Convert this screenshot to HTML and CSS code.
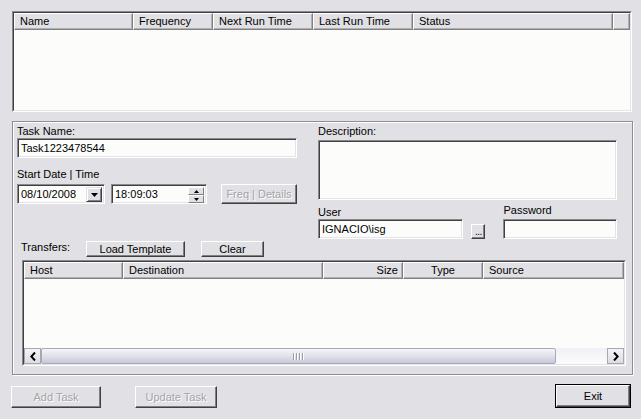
FILE: index.html
```html
<!DOCTYPE html>
<html>
<head>
<meta charset="utf-8">
<link rel="stylesheet" href="styles.css">
</head>
<body>
<div class="window">
  <div class="listview tasks">
    <div class="lv-inner">
      <div class="lv-header">
        <div class="hcell t-name">Name</div>
        <div class="hcell t-freq">Frequency</div>
        <div class="hcell t-next">Next Run Time</div>
        <div class="hcell t-last">Last Run Time</div>
        <div class="hcell t-status">Status</div>
        <div class="hcell t-fill"></div>
      </div>
      <div class="lv-body"></div>
    </div>
  </div>

  <div class="group">
    <div class="fields">
      <div class="col-left">
        <div class="label">Task Name:</div>
        <div class="field task-name">Task1223478544</div>
        <div class="label start-label">Start Date | Time</div>
        <div class="dt-row">
          <div class="field combo">
            <span class="val">08/10/2008</span>
            <span class="drop-btn"><svg width="7" height="4" viewBox="0 0 7 4"><path d="M0 0H7L3.5 4Z" fill="#000"/></svg></span>
          </div>
          <div class="field time">
            <span class="val">18:09:03</span>
            <span class="spin">
              <span class="spin-btn"><svg width="5" height="3" viewBox="0 0 5 3"><path d="M2.5 0L5 3H0Z" fill="#000"/></svg></span>
              <span class="spin-btn"><svg width="5" height="3" viewBox="0 0 5 3"><path d="M0 0H5L2.5 3Z" fill="#000"/></svg></span>
            </span>
          </div>
          <div class="btn disabled freq">Freq | Details</div>
        </div>
      </div>
      <div class="col-right">
        <div class="label">Description:</div>
        <div class="field desc"></div>
        <div class="cred-row">
          <div class="cred user">
            <div class="label">User</div>
            <div class="field">IGNACIO\isg</div>
          </div>
          <div class="btn browse"><span class="dots">...</span></div>
          <div class="cred pass">
            <div class="label pass-label">Password</div>
            <div class="field"></div>
          </div>
        </div>
      </div>
    </div>

    <div class="transfers-row">
      <div class="label tr-label">Transfers:</div>
      <div class="btn load">Load Template</div>
      <div class="btn clear">Clear</div>
    </div>

    <div class="listview transfers">
      <div class="lv-inner">
        <div class="lv-header">
          <div class="hcell r-host">Host</div>
          <div class="hcell r-dest">Destination</div>
          <div class="hcell r-size">Size</div>
          <div class="hcell r-type">Type</div>
          <div class="hcell r-src">Source</div>
        </div>
        <div class="lv-body"></div>
        <div class="hscroll">
          <div class="sb-arrow"><svg width="6" height="9" viewBox="0 0 6 9"><path d="M5 0.5L1.3 4.5L5 8.5" fill="none" stroke="#000" stroke-width="2"/></svg></div>
          <div class="sb-thumb">
            <span class="grip"></span><span class="grip"></span><span class="grip"></span><span class="grip"></span>
          </div>
          <div class="sb-track"></div>
          <div class="sb-arrow"><svg width="6" height="9" viewBox="0 0 6 9"><path d="M1 0.5L4.7 4.5L1 8.5" fill="none" stroke="#000" stroke-width="2"/></svg></div>
        </div>
      </div>
    </div>
  </div>

  <div class="actions">
    <div class="btn disabled add">Add Task</div>
    <div class="btn disabled update">Update Task</div>
    <div class="btn exit"><span class="exit-inner">Exit</span></div>
  </div>
</div>
</body>
</html>
```

FILE: styles.css
```css
* { box-sizing: border-box; }

body {
  margin: 0;
  background: #e1e0e4;
  font-family: "Liberation Sans", Arial, sans-serif;
  font-size: 11px;
  line-height: 13px;
  color: #000;
}

.window {
  width: 641px;
  height: 419px;
  padding: 11px 9px 0 12px;
}

/* ---------- list views ---------- */
.listview {
  border: 1px solid;
  border-color: #8a8a8e #ffffff #ffffff #8a8a8e;
  background: #fcfdfb;
}
.lv-inner {
  height: 100%;
  display: flex;
  flex-direction: column;
  border: 1px solid;
  border-color: #404040 #e4e3e7 #e4e3e7 #404040;
}
.tasks { width: 620px; height: 101px; }
.lv-header {
  display: flex;
  height: 17px;
  flex: none;
}
.hcell {
  height: 17px;
  padding: 1px 0 0 5px;
  background: #e1e0e4;
  border: 1px solid;
  border-color: #ffffff #808080 #808080 #ffffff;
  box-shadow: inset -1px -1px 0 #b0b0b4;
  white-space: nowrap;
  overflow: hidden;
}
.t-name { width: 119px; }
.t-freq { width: 80px; }
.t-next { width: 100px; }
.t-last { width: 100px; }
.t-status { width: 200px; }
.t-fill { flex: 1; }
.lv-body { flex: 1; background: #fcfdfb; }

/* ---------- group box ---------- */
.group {
  margin-top: 9px;
  width: 621px;
  height: 254px;
  border: 1px solid #8e8e92;
  box-shadow: inset 1px 1px 0 #ffffff, 1px 1px 0 #ffffff;
}
.fields {
  display: grid;
  grid-template-columns: 280px 299px;
  column-gap: 21px;
  padding: 3px 0 0 4px;
}
.label { height: 13px; white-space: nowrap; }

.field {
  height: 20px;
  background: #fcfdfb;
  border: 1px solid;
  border-color: #8a8a8e #ffffff #ffffff #8a8a8e;
  box-shadow: inset 1px 1px 0 #404040, inset -1px -1px 0 #e4e3e7;
  padding: 3px 0 0 3px;
  white-space: nowrap;
}
.task-name { width: 280px; }
.start-label { margin-top: 10px; }
.dt-row {
  display: flex;
  margin-top: 3px;
  height: 20px;
}
.combo {
  width: 88px;
  display: flex;
  justify-content: space-between;
  padding: 2px 2px 0 3px;
}
.combo .val { padding-top: 1px; }
.drop-btn {
  width: 16px;
  height: 15px;
  background: #e1e0e4;
  border: 1px solid;
  border-color: #e1e0e4 #404040 #404040 #e1e0e4;
  box-shadow: inset 1px 1px 0 #ffffff, inset -1px -1px 0 #808080;
  display: flex;
  align-items: center;
  justify-content: center;
}
.time {
  width: 96px;
  margin-left: 6px;
  display: flex;
  justify-content: space-between;
  padding: 2px 2px 0 3px;
}
.time .val { padding-top: 1px; }
.spin {
  width: 16px;
  height: 16px;
  display: flex;
  flex-direction: column;
}
.spin-btn {
  height: 8px;
  background: #e1e0e4;
  border: 1px solid;
  border-color: #ffffff #808080 #808080 #ffffff;
  display: flex;
  align-items: center;
  justify-content: center;
}

/* ---------- buttons ---------- */
.btn {
  background: #e1e0e4;
  border: 1px solid;
  border-color: #ffffff #404040 #404040 #ffffff;
  box-shadow: inset -1px -1px 0 #808080;
  text-align: center;
  white-space: nowrap;
}
.btn.disabled {
  color: #a3a3a7;
  text-shadow: 1px 1px 0 #ffffff;
}
.freq {
  width: 76px;
  height: 20px;
  margin-left: 14px;
  padding-top: 3px;
}

/* ---------- right column ---------- */
.desc { width: 299px; height: 60px; margin-top: 2px; }
.cred-row {
  display: flex;
  align-items: flex-end;
  margin-top: 4px;
  height: 35px;
}
.cred { display: flex; flex-direction: column; }
.user { width: 146px; }
.pass { width: 114px; margin-left: 18px; }
.pass-label { margin-bottom: 2px; }
.browse {
  width: 14px;
  height: 15px;
  margin-left: 8px;
  display: flex;
  align-items: flex-end;
  justify-content: center;
  overflow: hidden;
}
.dots {
  font-size: 10px;
  line-height: 10px;
  letter-spacing: -0.5px;
  padding-bottom: 1px;
}

/* ---------- transfers ---------- */
.transfers-row {
  display: flex;
  margin-top: 2px;
  padding-left: 8px;
  height: 16px;
}
.tr-label { width: 65px; }
.load { width: 99px; height: 16px; padding-top: 1px; }
.clear { width: 63px; height: 16px; margin-left: 16px; padding-top: 1px; }

.transfers {
  width: 604px;
  height: 106px;
  margin: 3px 0 0 9px;
}
.r-host { width: 99px; }
.r-dest { width: 200px; }
.r-size { width: 80px; text-align: right; padding: 1px 4px 0 0; }
.r-type { width: 80px; text-align: center; padding-left: 0; }
.r-src { flex: 1; }

.hscroll {
  height: 16px;
  flex: none;
  display: flex;
  background: linear-gradient(#f1f1f5, #fbfbfd);
}
.sb-arrow {
  width: 17px;
  height: 16px;
  border: 1px solid #a7a7b1;
  background: linear-gradient(#f4f4f8, #dcdce4);
  display: flex;
  align-items: center;
  justify-content: center;
}
.sb-thumb {
  width: 515px;
  height: 16px;
  border: 1px solid #a9aab8;
  border-radius: 2px;
  background: linear-gradient(#f5f6fa, #e0e1ea 50%, #c8c9d8);
  display: flex;
  justify-content: center;
  align-items: center;
  gap: 1px;
}
.grip {
  width: 1px;
  height: 7px;
  background: #9c9cac;
  box-shadow: 1px 0 0 #ffffff;
  margin-right: 1px;
}
.sb-track { flex: 1; }

/* ---------- bottom actions ---------- */
.actions {
  display: flex;
  align-items: flex-end;
  margin: 9px 1px 0 -1px;
  height: 24px;
}
.add { width: 90px; height: 22px; padding-top: 4px; }
.update { width: 82px; height: 22px; margin-left: 34px; padding-top: 4px; }
.exit {
  width: 76px;
  height: 24px;
  margin-left: auto;
  border: 1px solid #000;
  box-shadow: none;
  padding: 0;
}
.exit-inner {
  display: block;
  height: 22px;
  border: 1px solid;
  border-color: #ffffff #404040 #404040 #ffffff;
  box-shadow: inset -1px -1px 0 #808080;
  padding-top: 4px;
}
```
